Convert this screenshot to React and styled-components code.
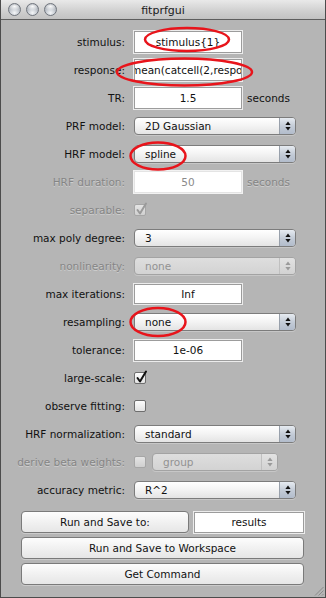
import React from "react";
import styled, { createGlobalStyle, css } from "styled-components";

const GlobalStyle = createGlobalStyle`
  html, body { margin: 0; padding: 0; background: #b5b5b5; }
  body { font-family: "DejaVu Sans", "Liberation Sans", sans-serif; }
  * { box-sizing: border-box; }
`;

const Window = styled.div`
  position: relative;
  width: 326px;
  height: 598px;
  background: #b5b5b5;
  border: 1px solid #4c4c4c;
  border-top: none;
  overflow: hidden;
`;

const TitleBar = styled.div`
  position: relative;
  height: 20px;
  border-bottom: 1px solid #5e5e5e;
  background: linear-gradient(#e9e9e9, #cfcfcf 60%, #c2c2c2);
  display: flex;
  align-items: center;
  justify-content: center;
`;

const Lights = styled.div`
  position: absolute;
  left: 7px;
  top: 3px;
  display: flex;
  gap: 5px;
`;

const Light = styled.span`
  width: 13px;
  height: 13px;
  border-radius: 50%;
  border: 1px solid #70757d;
  background:
    radial-gradient(ellipse 60% 35% at 50% 22%, rgba(255,255,255,0.95), rgba(255,255,255,0) 100%),
    radial-gradient(circle at 50% 80%, #f4f6f8 0%, #c3c8cf 45%, #8a9099 100%);
`;

const Title = styled.span`
  font-size: 11px;
  color: #1a1a1a;
  padding-top: 1px;
`;

const Body = styled.div`
  padding-top: 8px;
  display: flex;
  flex-direction: column;
`;

const Row = styled.div`
  display: grid;
  grid-template-columns: 124px 1fr;
  column-gap: 9px;
  align-items: center;
  height: 28px;
`;

const Label = styled.div`
  text-align: right;
  font-size: 10.5px;
  white-space: nowrap;
  color: ${(p) => (p.$disabled ? "#858585" : "#111")};
  ${(p) => p.$disabled && css`text-shadow: 0 1px 0 rgba(255,255,255,0.35);`}
`;

const Controls = styled.div`
  display: flex;
  align-items: center;
  gap: ${(p) => p.$gap || 5}px;
`;

const Field = styled.div`
  width: ${(p) => p.$w || 108}px;
  height: ${(p) => p.$h || 22}px;
  background: #fff;
  border: 1px solid ${(p) => (p.$disabled ? "#e4e4e4" : "#9c9c9c")};
  box-shadow: 0 0 0 1px ${(p) => (p.$disabled ? "#f2f2f2" : "#ececec")};
  display: flex;
  align-items: center;
  justify-content: ${(p) => (p.$left ? "flex-start" : "center")};
  overflow: hidden;
  white-space: nowrap;
  font-size: 10.5px;
  color: ${(p) => (p.$disabled ? "#8a8a8a" : "#111")};
`;

const Clipped = styled.span`
  margin-left: -4px;
`;

const Unit = styled.span`
  font-size: 10.5px;
  color: ${(p) => (p.$disabled ? "#858585" : "#111")};
  ${(p) => p.$disabled && css`text-shadow: 0 1px 0 rgba(255,255,255,0.35);`}
`;

const Popup = styled.div`
  width: ${(p) => p.$w || 162}px;
  height: 18px;
  border-radius: 4px;
  border: 1px solid ${(p) => (p.$disabled ? "#a3a3a3" : "#7c7c7c")};
  background: ${(p) =>
    p.$disabled
      ? "linear-gradient(#dedede, #d3d3d3)"
      : "linear-gradient(#ffffff, #f3f3f3 50%, #e4e4e4)"};
  display: flex;
  align-items: stretch;
  overflow: hidden;
  box-shadow: 0 1px 0 rgba(255,255,255,0.25);
`;

const PopupText = styled.div`
  flex: 1;
  padding-left: 10px;
  font-size: 10.5px;
  line-height: 16px;
  color: ${(p) => (p.$disabled ? "#929292" : "#111")};
`;

const Stepper = styled.div`
  width: 16px;
  border-left: 1px solid ${(p) => (p.$disabled ? "#c0c0c0" : "#98a0ab")};
  background: ${(p) =>
    p.$disabled
      ? "linear-gradient(#e2e2e2, #d2d2d2)"
      : "linear-gradient(#e6ebf1, #c4ccd7 50%, #b2bccb)"};
  display: flex;
  align-items: center;
  justify-content: center;
`;

const Check = styled.div`
  width: 12px;
  height: 12px;
  border-radius: 2px;
  border: 1px solid ${(p) => (p.$disabled ? "#a6a6a6" : "#6e6e6e")};
  background: ${(p) =>
    p.$disabled ? "linear-gradient(#e4e4e4, #d0d0d0)" : "linear-gradient(#fdfdfd, #e2e2e2)"};
  position: relative;
`;

const CheckMark = styled.svg`
  position: absolute;
  left: 0px;
  top: -3px;
`;

const Buttons = styled.div`
  padding: 7px 21px 0 20px;
  display: flex;
  flex-direction: column;
  gap: 4px;
`;

const ButtonRow = styled.div`
  display: grid;
  grid-template-columns: 168px 1fr;
  column-gap: 5px;
  align-items: center;
`;

const Button = styled.div`
  height: 22px;
  border-radius: 4px;
  border: 1px solid #7a7a7a;
  background: linear-gradient(#fdfdfd, #f1f1f1 50%, #e6e6e6);
  display: flex;
  align-items: center;
  justify-content: center;
  font-size: 10.5px;
  color: #111;
  box-shadow: 0 1px 0 rgba(255,255,255,0.3);
`;

const Overlay = styled.svg`
  position: absolute;
  left: 0;
  top: 0;
  pointer-events: none;
`;

const Grip = styled.svg`
  position: absolute;
  right: 1px;
  bottom: 1px;
`;

function Arrows({ disabled }) {
  const c = disabled ? "#9a9a9a" : "#111";
  return (
    <svg width="6" height="10" viewBox="0 0 6 10">
      <path d="M3 0.5 L5.6 4 L0.4 4 Z" fill={c} />
      <path d="M3 9.5 L5.6 6 L0.4 6 Z" fill={c} />
    </svg>
  );
}

function Select({ value, disabled, w }) {
  return (
    <Popup $disabled={disabled} $w={w}>
      <PopupText $disabled={disabled}>{value}</PopupText>
      <Stepper $disabled={disabled}>
        <Arrows disabled={disabled} />
      </Stepper>
    </Popup>
  );
}

function CheckBox({ checked, disabled }) {
  return (
    <Check $disabled={disabled}>
      {checked && (
        <CheckMark width="13" height="14" viewBox="0 0 13 14">
          <path
            d="M2.5 8 L5 11.5 L11 1.5"
            fill="none"
            stroke={disabled ? "#9a9a9a" : "#111"}
            strokeWidth="2"
            strokeLinecap="round"
            strokeLinejoin="round"
          />
        </CheckMark>
      )}
    </Check>
  );
}

const rows = [
  { label: "stimulus:", kind: "field", value: "stimulus{1}" },
  { label: "response:", kind: "field", value: "mean(catcell(2,response),3)", left: true },
  { label: "TR:", kind: "field", value: "1.5", unit: "seconds" },
  { label: "PRF model:", kind: "select", value: "2D Gaussian" },
  { label: "HRF model:", kind: "select", value: "spline" },
  { label: "HRF duration:", kind: "field", value: "50", unit: "seconds", disabled: true },
  { label: "separable:", kind: "check", checked: true, disabled: true },
  { label: "max poly degree:", kind: "select", value: "3" },
  { label: "nonlinearity:", kind: "select", value: "none", disabled: true },
  { label: "max iterations:", kind: "field", value: "Inf", h: 20 },
  { label: "resampling:", kind: "select", value: "none" },
  { label: "tolerance:", kind: "field", value: "1e-06", h: 21 },
  { label: "large-scale:", kind: "check", checked: true },
  { label: "observe fitting:", kind: "check", checked: false },
  { label: "HRF normalization:", kind: "select", value: "standard" },
  { label: "derive beta weights:", kind: "checkselect", value: "group", disabled: true },
  { label: "accuracy metric:", kind: "select", value: "R^2" },
];

function Control({ r }) {
  if (r.kind === "field") {
    return (
      <Controls>
        <Field $disabled={r.disabled} $left={r.left} $h={r.h}>
          {r.left ? <Clipped>{r.value}</Clipped> : r.value}
        </Field>
        {r.unit && <Unit $disabled={r.disabled}>{r.unit}</Unit>}
      </Controls>
    );
  }
  if (r.kind === "select") {
    return (
      <Controls>
        <Select value={r.value} disabled={r.disabled} />
      </Controls>
    );
  }
  if (r.kind === "check") {
    return (
      <Controls>
        <CheckBox checked={r.checked} disabled={r.disabled} />
      </Controls>
    );
  }
  return (
    <Controls $gap={6}>
      <CheckBox checked={false} disabled />
      <Select value={r.value} disabled w={126} />
    </Controls>
  );
}

export default function App() {
  return (
    <>
      <GlobalStyle />
      <Window>
        <TitleBar>
          <Lights>
            <Light />
            <Light />
            <Light />
          </Lights>
          <Title>fitprfgui</Title>
        </TitleBar>
        <Body>
          {rows.map((r) => (
            <Row key={r.label}>
              <Label $disabled={r.disabled}>{r.label}</Label>
              <Control r={r} />
            </Row>
          ))}
          <Buttons>
            <ButtonRow>
              <Button>Run and Save to:</Button>
              <Field $w={110} $h={21}>results</Field>
            </ButtonRow>
            <Button>Run and Save to Workspace</Button>
            <Button>Get Command</Button>
          </Buttons>
        </Body>
        <Overlay width="326" height="598" viewBox="0 0 326 598">
          <g fill="none" stroke="#e8141b" strokeWidth="2.5">
            <ellipse cx="186" cy="39.5" rx="42" ry="11.5" />
            <ellipse cx="183.5" cy="72" rx="67.5" ry="13.5" />
            <ellipse cx="157" cy="156" rx="27.5" ry="13.5" />
            <ellipse cx="157" cy="322" rx="27.5" ry="14" />
          </g>
        </Overlay>
        <Grip width="10" height="10" viewBox="0 0 10 10">
          <g stroke="#8a8a8a" strokeWidth="1">
            <line x1="9.5" y1="1" x2="1" y2="9.5" />
            <line x1="9.5" y1="4.5" x2="4.5" y2="9.5" />
            <line x1="9.5" y1="8" x2="8" y2="9.5" />
          </g>
        </Grip>
      </Window>
    </>
  );
}
